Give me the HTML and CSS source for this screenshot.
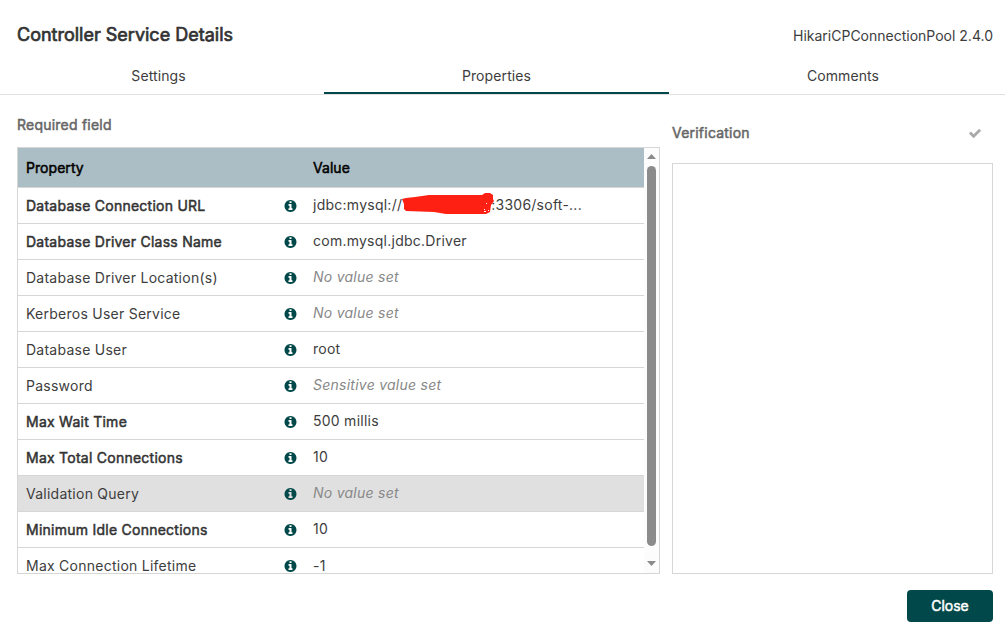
FILE: index.html
```
<!DOCTYPE html>
<html lang="en">
    <head>
        <meta charset="utf-8">
        <title>Controller Service Details</title>
        <link rel="stylesheet" href="styles.css">
    </head>
    <body>
        <svg class="sprite">
            <symbol id="info" viewBox="0 0 1536 1536">
                <path transform="matrix(1 0 0 -1 0 1408)" d="M1024 160v160q0 14 -9 23t-23 9h-96v512q0 14 -9 23t-23 9h-320q-14 0 -23 -9t-9 -23v-160q0 -14 9 -23t23 -9h96v-320h-96q-14 0 -23 -9t-9 -23v-160q0 -14 9 -23t23 -9h448q14 0 23 9t9 23zM896 1056v160q0 14 -9 23t-23 9h-192q-14 0 -23 -9t-9 -23v-160q0 -14 9 -23t23 -9h192q14 0 23 9t9 23zM1536 640q0 -209 -103 -385.5t-279.5 -279.5t-385.5 -103t-385.5 103t-279.5 279.5t-103 385.5t103 385.5t279.5 279.5t385.5 103t385.5 -103t279.5 -279.5t103 -385.5z"/>
            </symbol>
        </svg>

        <div class="dialog">
            <div class="header">
                <h2 class="title">Controller Service Details</h2>
                <div class="type">HikariCPConnectionPool 2.4.0</div>
            </div>

            <div class="tabs">
                <div class="tab tab-settings">Settings</div>
                <div class="tab tab-properties active">Properties</div>
                <div class="tab tab-comments">Comments</div>
            </div>

            <div class="content">
                <div class="properties">
                    <div class="label">Required field</div>
                    <div class="listing">
                        <table class="table">
                            <thead>
                                <tr><th class="name-column">Property</th><th>Value</th></tr>
                            </thead>
                            <tbody>
                                <tr>
                                    <td><div class="name required">Database Connection URL<svg class="info"><use href="#info"/></svg></div></td>
                                    <td><div class="value">jdbc:mysql://<svg class="redacted" viewBox="0 0 92 22"><path d="M0 6L4 5L13 4L27 2L80 2L83 0L88 0L91 2L91 6L92 8L89 12L88 19L84 21L44 21L32 19L4 18L2 16L2 11Z"/><path class="speck" d="M84 10h1v1h-1zM82 16h1v1h-1zM82 18h2v1h-2zM86 17h1v1h-1z"/></svg>:3306/soft-...</div></td>
                                </tr>
                                <tr>
                                    <td><div class="name required">Database Driver Class Name<svg class="info"><use href="#info"/></svg></div></td>
                                    <td><div class="value">com.mysql.jdbc.Driver</div></td>
                                </tr>
                                <tr>
                                    <td><div class="name">Database Driver Location(s)<svg class="info"><use href="#info"/></svg></div></td>
                                    <td><div class="value unset">No value set</div></td>
                                </tr>
                                <tr>
                                    <td><div class="name">Kerberos User Service<svg class="info"><use href="#info"/></svg></div></td>
                                    <td><div class="value unset">No value set</div></td>
                                </tr>
                                <tr>
                                    <td><div class="name">Database User<svg class="info"><use href="#info"/></svg></div></td>
                                    <td><div class="value">root</div></td>
                                </tr>
                                <tr>
                                    <td><div class="name">Password<svg class="info"><use href="#info"/></svg></div></td>
                                    <td><div class="value unset">Sensitive value set</div></td>
                                </tr>
                                <tr>
                                    <td><div class="name required">Max Wait Time<svg class="info"><use href="#info"/></svg></div></td>
                                    <td><div class="value">500 millis</div></td>
                                </tr>
                                <tr>
                                    <td><div class="name required">Max Total Connections<svg class="info"><use href="#info"/></svg></div></td>
                                    <td><div class="value">10</div></td>
                                </tr>
                                <tr class="selected">
                                    <td><div class="name">Validation Query<svg class="info"><use href="#info"/></svg></div></td>
                                    <td><div class="value unset">No value set</div></td>
                                </tr>
                                <tr>
                                    <td><div class="name required">Minimum Idle Connections<svg class="info"><use href="#info"/></svg></div></td>
                                    <td><div class="value">10</div></td>
                                </tr>
                                <tr>
                                    <td><div class="name">Max Connection Lifetime<svg class="info"><use href="#info"/></svg></div></td>
                                    <td><div class="value last">-1</div></td>
                                </tr>
                            </tbody>
                        </table>
                        <div class="scrollbar">
                            <svg class="arrow" viewBox="0 0 9 5"><path d="M0 5L4.5 0L9 5Z"/></svg>
                            <div class="thumb"></div>
                            <svg class="arrow" viewBox="0 0 9 5"><path d="M0 0L4.5 5L9 0Z"/></svg>
                        </div>
                    </div>
                </div>

                <div class="verification">
                    <div class="verification-header">
                        <div class="label">Verification</div>
                        <svg class="check" viewBox="121 0 1550 1188">
                            <path transform="matrix(1 0 0 -1 0 1202)" d="M1671 970q0 -40 -28 -68l-724 -724l-136 -136q-28 -28 -68 -28t-68 28l-136 136l-362 362q-28 28 -28 68t28 68l136 136q28 28 68 28t68 -28l294 -295l656 657q28 28 68 28t68 -28l136 -136q28 -28 28 -68z"/>
                        </svg>
                    </div>
                    <div class="results"></div>
                </div>
            </div>

            <div class="actions">
                <button class="close">Close</button>
            </div>
        </div>
    </body>
</html>
```
FILE: styles.css
```
* {
    box-sizing: border-box;
}
body {
    margin: 0;
    background-color: #fff;
    color: #3d3d3d;
    font-family: Inter, "Liberation Sans", sans-serif;
    font-size: 14px;
}
.sprite {
    display: none;
}
.dialog {
    display: flex;
    flex-direction: column;
    height: 628px;
    overflow: hidden;
}
.header {
    display: flex;
    justify-content: space-between;
    height: 58px;
    padding: 23px 12px 0 17px;
}
.title {
    margin: 0;
    color: #333;
    font-size: 18px;
    font-weight: 400;
    line-height: 24px;
    -webkit-text-stroke: 0.7px;
}
.type {
    line-height: 25px;
}

.tabs {
    display: flex;
    height: 37px;
    border-bottom: 1px solid #e0e0e0;
}
.tab {
    height: 36px;
    line-height: 36px;
    text-align: center;
    letter-spacing: 0.1px;
}
.tab-settings {
    width: 324px;
    padding-right: 7px;
}
.tab-properties {
    width: 345px;
}
.tab-comments {
    flex: 1;
    padding-left: 12px;
}
.active {
    border-bottom: 2px solid #004849;
}

.content {
    display: flex;
    gap: 12px;
    height: 479px;
    padding: 0 12px 0 17px;
}
.label {
    color: #666;
    line-height: 20px;
    letter-spacing: 0.22px;
    -webkit-text-stroke: 0.5px;
}
.properties {
    width: 643px;
    padding-top: 20px;
}
.listing {
    display: flex;
    height: 427px;
    margin-top: 12px;
    border: 1px solid #d6d6d6;
    overflow: hidden;
}
.table {
    width: 626px;
    height: 436px;
    border-collapse: separate;
    border-spacing: 0;
    table-layout: fixed;
}
.name-column {
    width: 287px;
}
th {
    height: 40px;
    padding: 0 8px;
    background-color: #abbdc5;
    border-bottom: 1px solid #d6d6d6;
    color: #000;
    font-weight: 400;
    text-align: left;
    letter-spacing: 0.05px;
    -webkit-text-stroke: 0.5px;
}
td {
    height: 36px;
    padding: 0 8px;
    border-bottom: 1px solid #d6d6d6;
    letter-spacing: 0.25px;
}
.name {
    display: flex;
    align-items: center;
    justify-content: space-between;
    height: 35px;
    padding-bottom: 1px;
}
.required {
    color: #333;
    -webkit-text-stroke: 0.5px;
}
.info {
    width: 13px;
    height: 12px;
    margin-top: 2px;
    fill: #004849;
    -webkit-text-stroke: 0;
}
.value {
    display: flex;
    align-items: center;
    height: 35px;
    padding-bottom: 3px;
}
.last {
    padding: 0 0 1px;
}
.unset {
    color: #888;
    font-style: italic;
}
.redacted {
    width: 92px;
    height: 22px;
    margin: 0 -3px 0 0;
    fill: #ff2014;
}
.speck {
    fill: #fff;
}
.selected {
    background-color: #e0e0e0;
}

.scrollbar {
    display: flex;
    flex-direction: column;
    align-items: center;
    width: 15px;
    padding-top: 6px;
    background-color: #fcfcfc;
}
.arrow {
    width: 9px;
    height: 5px;
    fill: #8b8b8b;
}
.thumb {
    width: 9px;
    height: 380px;
    margin: 7px 0 15px;
    border-radius: 5px;
    background-color: #8b8b8b;
}

.verification {
    flex: 1;
    padding-top: 28px;
}
.verification-header {
    display: flex;
    align-items: center;
    justify-content: space-between;
    height: 20px;
    padding-right: 12px;
}
.check {
    width: 12px;
    height: 9px;
    fill: #aaa;
}
.results {
    height: 411px;
    margin-top: 20px;
    border: 1px solid #d6d6d6;
}

.actions {
    display: flex;
    justify-content: flex-end;
    padding: 16px 12px 0;
}
.close {
    width: 86px;
    height: 32px;
    padding: 0 0 2px;
    border: 0;
    border-radius: 4px;
    background-color: #004849;
    color: #fff;
    font: 14px Inter, "Liberation Sans", sans-serif;
    -webkit-text-stroke: 0.5px;
}
```
